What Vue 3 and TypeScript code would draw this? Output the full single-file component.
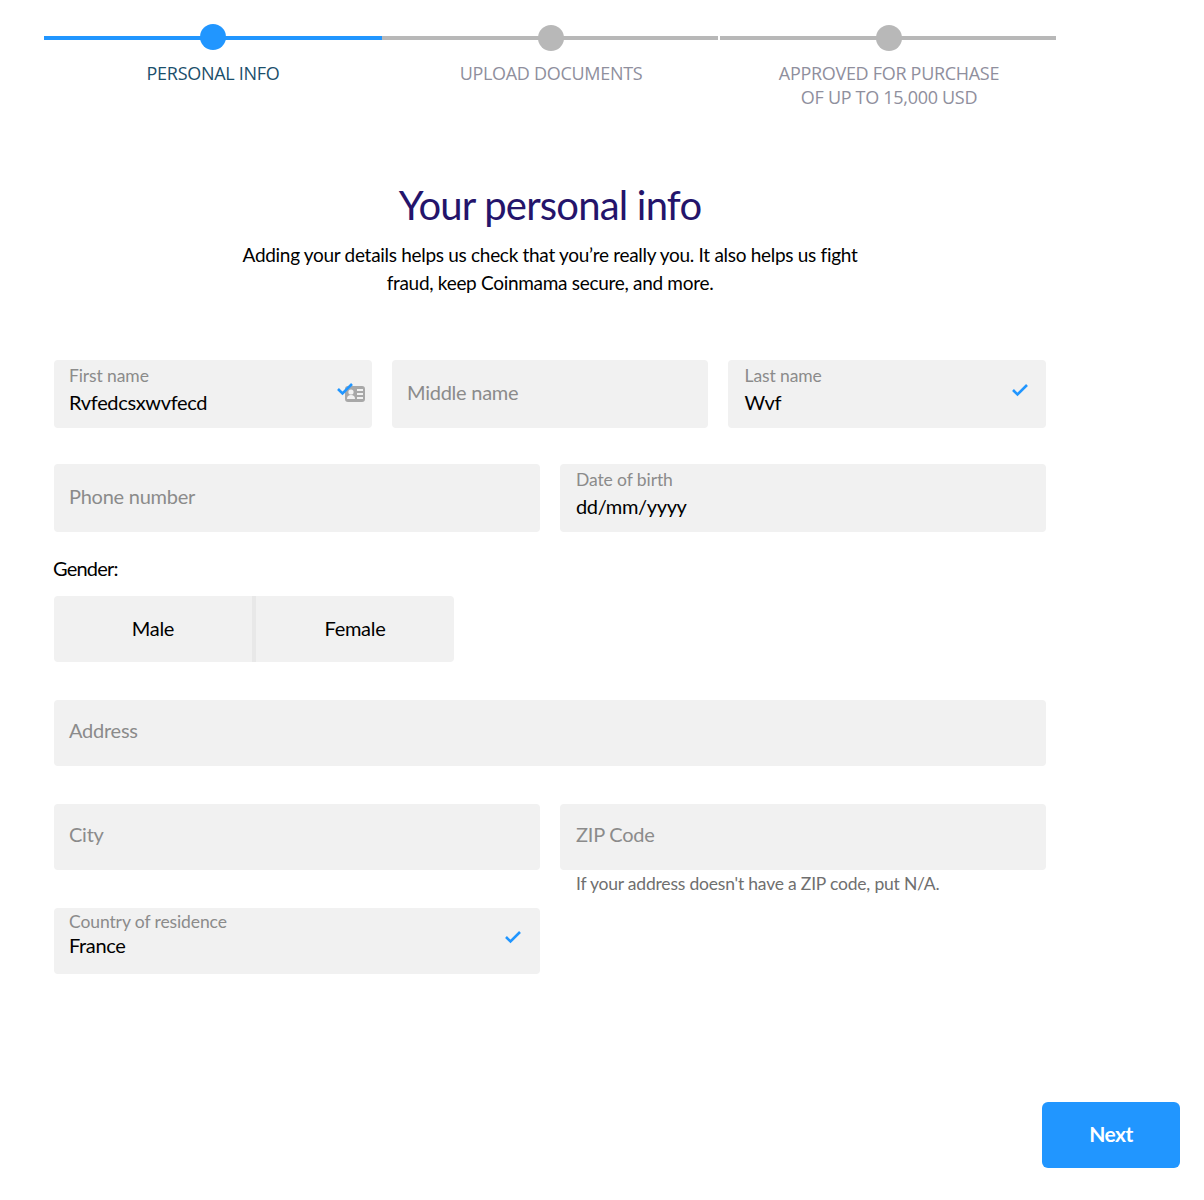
<script setup lang="ts">
import { ref } from 'vue'

const steps = [
  { id: 1, label: ['PERSONAL INFO'], active: true },
  { id: 2, label: ['UPLOAD DOCUMENTS'], active: false },
  { id: 3, label: ['APPROVED FOR PURCHASE', 'OF UP TO 15,000 USD'], active: false },
]

const gender = ref<string>('')
</script>

<template>
  <div class="page">
    <div class="stepper">
      <div v-for="step in steps" :key="step.id" class="step" :class="{ active: step.active }">
        <div class="track">
          <span class="dot"></span>
        </div>
        <div class="step-label">
          <div v-for="line in step.label" :key="line">{{ line }}</div>
        </div>
      </div>
    </div>

    <div class="intro">
      <h1>Your personal info</h1>
      <p>Adding your details helps us check that you’re really you. It also helps us fight<br />fraud, keep Coinmama secure, and more.</p>
    </div>

    <div class="form">
      <div class="row row-three">
        <div class="field filled">
          <label>First name</label>
          <div class="value">Rvfedcsxwvfecd</div>
          <svg class="contact-icon" width="22" height="18" viewBox="0 0 22 18">
            <rect x="1" y="1" width="20" height="16" rx="3" fill="#a8a8a8" />
            <circle cx="7" cy="7" r="2.6" fill="#f1f1f1" />
            <path d="M3 14c0-3 1.600-4 4-4s4 1 4 4z" fill="#f1f1f1" />
            <path d="M13 5h6M13 9h6M13 13h6" stroke="#f1f1f1" stroke-width="2" />
          </svg>
          <svg class="check first-check" width="18" height="14" viewBox="0 0 18 14">
            <path d="M2 7l4.500 4.500L16 2" fill="none" stroke="#2196ff" stroke-width="2.600" />
          </svg>
        </div>
        <div class="field">
          <span class="placeholder">Middle name</span>
        </div>
        <div class="field filled wide-pad">
          <label>Last name</label>
          <div class="value">Wvf</div>
          <svg class="check" width="18" height="14" viewBox="0 0 18 14">
            <path d="M2 7l4.500 4.500L16 2" fill="none" stroke="#2196ff" stroke-width="2.600" />
          </svg>
        </div>
      </div>

      <div class="row row-two row-phone">
        <div class="field">
          <span class="placeholder">Phone number</span>
        </div>
        <div class="field filled right-pad">
          <label>Date of birth</label>
          <div class="value">dd/mm/yyyy</div>
        </div>
      </div>

      <div class="gender-label">Gender:</div>
      <div class="gender">
        <button :class="{ picked: gender === 'male' }" @click="gender = 'male'">Male</button>
        <button :class="{ picked: gender === 'female' }" @click="gender = 'female'">Female</button>
      </div>

      <div class="field short address">
        <span class="placeholder">Address</span>
      </div>

      <div class="row row-two row-city">
        <div class="field short">
          <span class="placeholder">City</span>
        </div>
        <div>
          <div class="field short right-pad">
            <span class="placeholder">ZIP Code</span>
          </div>
          <div class="hint">If your address doesn't have a ZIP code, put N/A.</div>
        </div>
      </div>

      <div class="row row-two row-country">
        <div class="field short filled">
          <label>Country of residence</label>
          <div class="value">France</div>
          <svg class="check country-check" width="18" height="14" viewBox="0 0 18 14">
            <path d="M2 7l4.500 4.500L16 2" fill="none" stroke="#2196ff" stroke-width="2.600" />
          </svg>
        </div>
      </div>
    </div>

    <div class="actions">
      <button class="next">Next</button>
    </div>
  </div>
</template>

<style>
body {
  background: #fff;
}
</style>

<style scoped>
.page {
  width: 1204px;
  height: 1200px;
  box-sizing: border-box;
  padding: 24px 24px 0 44px;
  font-family: Lato, "Open Sans", sans-serif;
  color: #000;
}

.stepper {
  display: flex;
  width: 1014px;
  height: 88px;
}

.step {
  flex: 1;
  font-family: "Open Sans", sans-serif;
  font-size: 18px;
  line-height: 24px;
  color: #8f8f9d;
  text-align: center;
  letter-spacing: -0.3px;
}

.step.active {
  color: #1b4f6b;
}

.track {
  height: 26px;
  display: flex;
  align-items: center;
  justify-content: center;
  background: linear-gradient(#b8b8b8, #b8b8b8) left 0 top 12px / calc(100% - 2px) 4px no-repeat;
}

.active .track {
  background-image: linear-gradient(#2196ff, #2196ff);
  background-size: 100% 4px;
}

.dot {
  width: 26px;
  height: 26px;
  margin-top: 2px;
  border-radius: 50%;
  background: #b8b8b8;
}

.active .dot {
  margin-top: 0;
  background: #2196ff;
}

.step-label {
  margin-top: 11px;
}

.intro {
  margin-top: 63px;
  text-align: center;
  width: 1012px;
}

.intro h1 {
  margin: 0;
  font-size: 40px;
  line-height: 60px;
  font-weight: 400;
  color: #24146b;
  letter-spacing: -0.8px;
}

.intro p {
  margin: 6px 0 0;
  font-size: 19px;
  line-height: 28px;
  letter-spacing: -0.3px;
}

.form {
  margin: 63px 0 0 10px;
  width: 992px;
}

.row {
  display: grid;
  column-gap: 20px;
}

.row-three {
  grid-template-columns: 318px 316px 318px;
}

.row-two {
  grid-template-columns: 486px 486px;
}

.row-phone {
  margin-top: 36px;
}

.field {
  position: relative;
  height: 68px;
  box-sizing: border-box;
  padding: 0 15px 4px;
  background: #f1f1f1;
  border-radius: 4px;
  display: flex;
  flex-direction: column;
  justify-content: center;
}

.field.short {
  height: 66px;
  padding-bottom: 6px;
}

.field.filled {
  justify-content: flex-start;
  padding-top: 5px;
  padding-bottom: 0;
}

.field.short.filled {
  padding-top: 3px;
}

.field.wide-pad {
  padding-left: 16.500px;
}

.field.right-pad {
  padding-left: 16px;
}

.placeholder {
  font-size: 20px;
  color: #8b8b8b;
  letter-spacing: -0.25px;
}

.field label {
  font-size: 17.500px;
  line-height: 22px;
  color: #8b8b8b;
  letter-spacing: -0.1px;
}

.value {
  margin-top: 1px;
  font-size: 20px;
  line-height: 28px;
  letter-spacing: -0.35px;
}

.short .value {
  margin-top: -2px;
}

.check {
  position: absolute;
  top: 23px;
  right: 17px;
}

.first-check {
  top: 22px;
  right: 18px;
}

.contact-icon {
  position: absolute;
  top: 25px;
  right: 6px;
}

.country-check {
  top: 22px;
  right: 18px;
}

.gender-label {
  margin: 23px 0 0 -1px;
  font-size: 20px;
  line-height: 26px;
  letter-spacing: -0.8px;
}

.gender {
  margin-top: 15px;
  width: 400px;
  height: 66px;
  display: flex;
  border-radius: 4px;
  overflow: hidden;
}

.gender button {
  flex: 1;
  border: none;
  padding: 0 0 2px;
  background: #f1f1f1;
  font: inherit;
  font-size: 20px;
  letter-spacing: -0.3px;
  color: #000;
}

.gender button + button {
  border-left: 4px solid #e8e8e8;
}

.address {
  margin-top: 38px;
}

.row-city {
  margin-top: 38px;
}

.hint {
  margin: 4px 0 0 16px;
  font-size: 17.500px;
  line-height: 20px;
  color: #6f6f6f;
  letter-spacing: -0.2px;
}

.row-country {
  margin-top: 14px;
}

.actions {
  display: flex;
  justify-content: flex-end;
  margin-top: 128px;
}

.next {
  width: 138px;
  height: 66px;
  border: none;
  border-radius: 6px;
  padding: 0 0 4px;
  background: #2196ff;
  color: #fff;
  font: inherit;
  font-size: 21px;
  font-weight: 700;
  letter-spacing: -0.5px;
}
</style>
